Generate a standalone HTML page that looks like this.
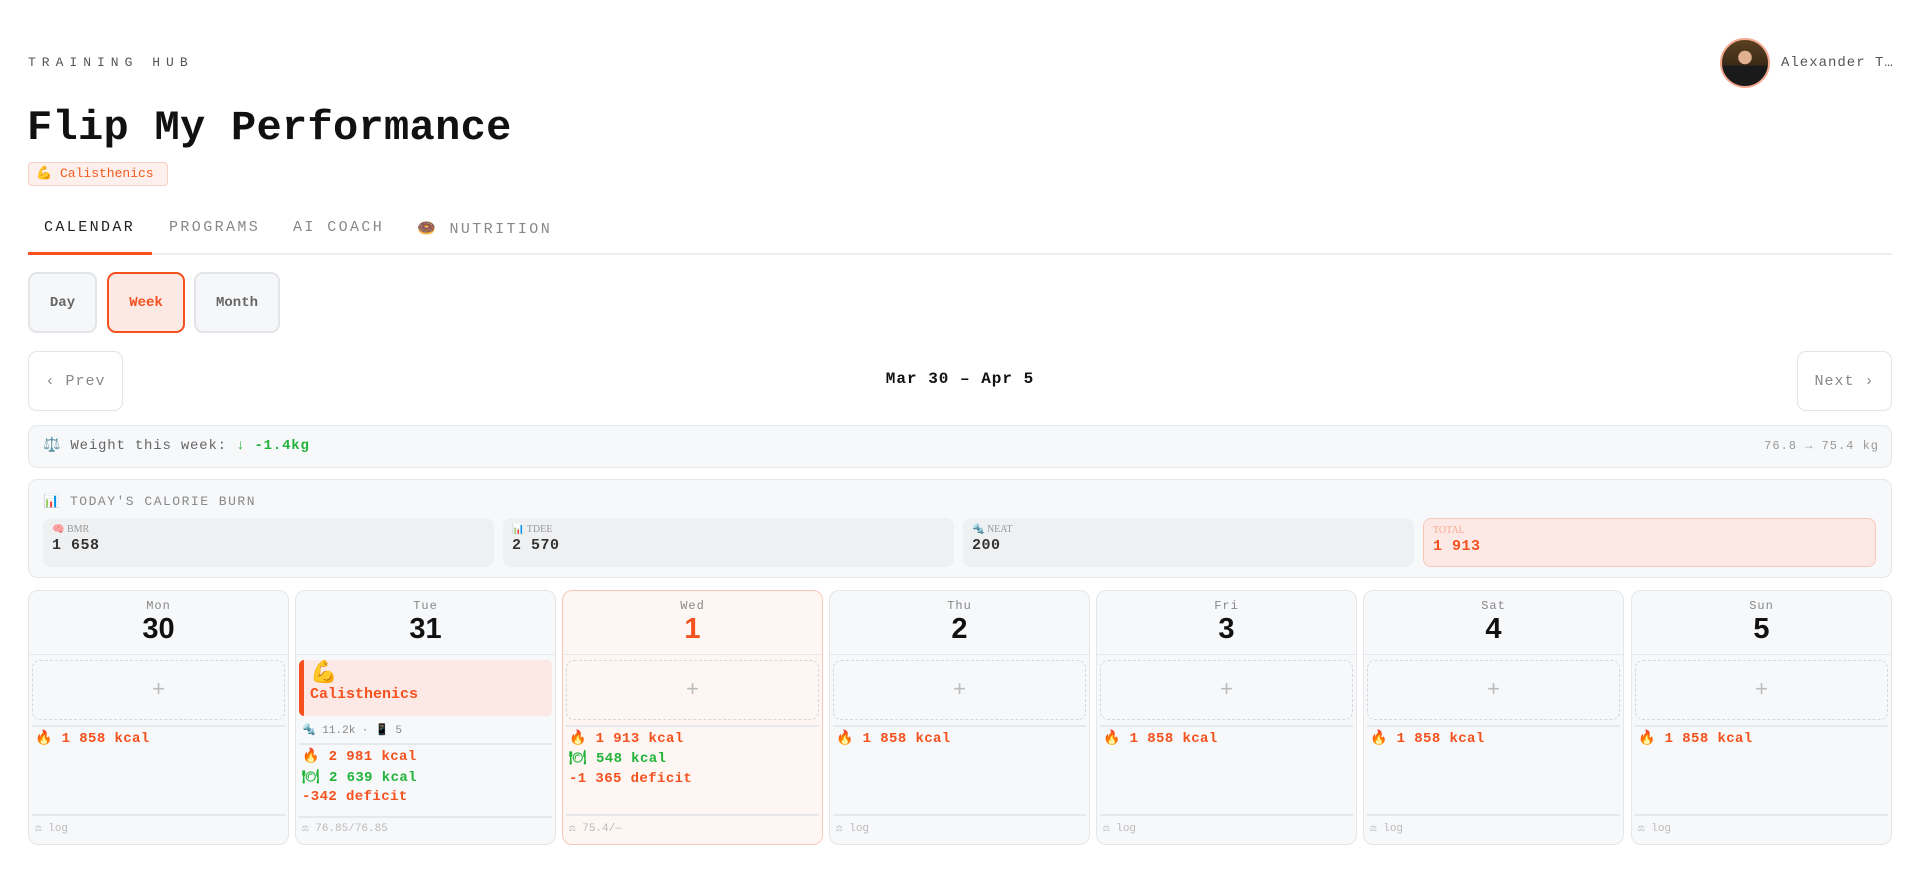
<!DOCTYPE html>
<html><head><meta charset="utf-8"><style>
*{box-sizing:border-box;margin:0;padding:0}
body{width:1920px;height:879px;background:#fff;font-family:"Liberation Mono",monospace;color:#222;position:relative;overflow:hidden}
.a{position:absolute}
.hub{left:28px;top:55px;font-size:13px;letter-spacing:6px;color:#555}
.title{left:27px;top:103px;font-size:42px;font-weight:bold;color:#111;line-height:50px;letter-spacing:0.3px}
.badge{left:28px;top:162px;height:24px;width:140px;border:1px solid #f8cfc4;background:#fdf0ec;border-radius:4px;font-size:13px;color:#f05a1e;padding:3px 7px;line-height:16px}
.tab{top:219px;font-size:15px;letter-spacing:2.4px;color:#888}
.line{left:28px;top:253px;width:1864px;height:2px;background:#eee}
.uline{left:28px;top:252px;width:124px;height:3px;background:#f4511e}
.btn{top:272px;height:61px;border:2px solid #e2e4e7;background:#f6f7f9;border-radius:9px;font-size:14px;font-weight:bold;color:#666;display:flex;align-items:center;justify-content:center}
.nav{top:351px;height:60px;width:95px;border:1.5px solid #e3e4e6;border-radius:9px;font-size:15px;color:#888;display:flex;align-items:center;justify-content:center;background:#fff;letter-spacing:1px}
.card{left:28px;width:1864px;border:1.5px solid #e6e8eb;background:#f7f8fa;border-radius:9px}
.sub{top:518px;height:49px;width:451px;background:#eff0f2;border-radius:8px;padding:6px 9px}
.sub .l{font-size:10px;color:#999;font-family:"Liberation Serif",serif;line-height:12px}
.sub .v{font-size:15px;font-weight:bold;color:#333;line-height:20px;letter-spacing:0.5px}
.col{top:590px;width:261px;height:255px;border:1.5px solid #e4e6e9;background:#f7f8fa;border-radius:10px}
.col .dn{position:absolute;top:8px;width:100%;text-align:center;font-size:12px;color:#888;letter-spacing:1px}
.col .num{position:absolute;top:22px;width:100%;text-align:center;font-size:29px;font-weight:bold;color:#111;font-family:"Liberation Sans",sans-serif}
.col .hd{position:absolute;top:63px;left:0;right:0;height:1px;background:#e6e8eb}
.col .add{position:absolute;top:69px;left:3px;right:3px;height:60px;border:1.5px dashed #d6d8db;border-radius:8px;text-align:center;line-height:56px;font-size:22px;color:#bbb;font-family:"Liberation Sans",sans-serif}
.col .sep{position:absolute;top:134px;left:3px;right:3px;height:1.5px;background:#e6e8eb}
.col .k{position:absolute;left:6px;font-size:14px;font-weight:bold;color:#f4511e;letter-spacing:0.4px}
.col .g{color:#22b33a}
.col .fd{position:absolute;top:223px;left:3px;right:3px;height:1.5px;background:#e6e8eb}
.col .ft{position:absolute;top:230px;left:6px;font-size:11px;color:#bbb}
.today{background:#fdf6f3;border-color:#f8c7b8}
</style></head><body>
<div class="a hub">TRAINING HUB</div>
<div class="a" style="left:1720px;top:38px;width:50px;height:50px;border-radius:50%;border:2px solid #f3a98f;background:radial-gradient(circle at 50% 38%,#e0b090 0 18%,transparent 19%),linear-gradient(180deg,#5a4020 0,#3b2a18 55%,#1a1a1a 56%,#1a1a1a 100%)"></div>
<div class="a" style="left:1781px;top:55px;font-size:14px;color:#555;letter-spacing:1px">Alexander T…</div>
<div class="a title">Flip My Performance</div>
<div class="a badge">💪 Calisthenics</div>
<div class="a tab" style="left:44px;color:#222">CALENDAR</div>
<div class="a tab" style="left:169px">PROGRAMS</div>
<div class="a tab" style="left:293px">AI COACH</div>
<div class="a tab" style="left:417px">🍩 NUTRITION</div>
<div class="a line"></div><div class="a uline"></div>
<div class="a btn" style="left:28px;width:69px">Day</div>
<div class="a btn" style="left:107px;width:78px;border-color:#f4511e;background:#fde9e4;color:#f4511e">Week</div>
<div class="a btn" style="left:194px;width:86px">Month</div>
<div class="a nav" style="left:28px">‹ Prev</div>
<div class="a" style="left:0;width:1920px;top:370px;text-align:center;font-size:16px;font-weight:bold;color:#111;letter-spacing:1px">Mar 30 – Apr 5</div>
<div class="a nav" style="left:1797px">Next ›</div>
<div class="a card" style="top:425px;height:43px"></div>
<div class="a" style="left:43px;top:437px;font-size:14px;color:#666;letter-spacing:0.8px">⚖️ Weight this week: <b style="color:#22b33a">↓ -1.4kg</b></div>
<div class="a" style="right:41px;top:439px;font-size:12px;color:#999;letter-spacing:1px">76.8 → 75.4 kg</div>
<div class="a card" style="top:479px;height:99px"></div>
<div class="a" style="left:43px;top:494px;font-size:13px;color:#888;letter-spacing:1.5px">📊 TODAY'S CALORIE BURN</div>
<div class="a sub" style="left:43px"><div class="l">🧠 BMR</div><div class="v">1 658</div></div>
<div class="a sub" style="left:503px"><div class="l">📊 TDEE</div><div class="v">2 570</div></div>
<div class="a sub" style="left:963px"><div class="l">🔩 NEAT</div><div class="v">200</div></div>
<div class="a sub" style="left:1423px;width:453px;background:#fce9e6;border:1px solid #f8c7b8"><div class="l" style="color:#f8a890">TOTAL</div><div class="v" style="color:#f4511e">1 913</div></div>

<div class="a col" style="left:28px"><div class="dn">Mon</div><div class="num">30</div><div class="hd"></div><div class="add">+</div><div class="sep"></div><div class="k" style="top:139px">🔥 1 858 kcal</div><div class="fd"></div><div class="ft">⚖ log</div></div>
<div class="a col" style="left:295px"><div class="dn">Tue</div><div class="num">31</div><div class="hd"></div>
<div style="position:absolute;top:69px;left:3px;right:3px;height:56px;background:#fce9e6;border-left:5px solid #f4511e;border-radius:5px;padding:2px 6px"><div style="font-size:22px;line-height:24px">💪</div><div style="font-size:15px;font-weight:bold;color:#f4511e">Calisthenics</div></div>
<div class="ft" style="top:132px;color:#888">🔩 11.2k · 📱 5</div>
<div class="sep" style="top:152px"></div>
<div class="k" style="top:157px">🔥 2 981 kcal</div><div class="k g" style="top:178px">🍽 2 639 kcal</div><div class="k" style="top:198px">-342 deficit</div>
<div class="fd" style="top:225px"></div><div class="ft">⚖ 76.85/76.85</div></div>
<div class="a col today" style="left:562px"><div class="dn">Wed</div><div class="num" style="color:#f4511e">1</div><div class="hd"></div><div class="add">+</div><div class="sep"></div><div class="k" style="top:139px">🔥 1 913 kcal</div><div class="k g" style="top:159px">🍽 548 kcal</div><div class="k" style="top:180px">-1 365 deficit</div><div class="fd"></div><div class="ft">⚖ 75.4/—</div></div>
<div class="a col" style="left:829px"><div class="dn">Thu</div><div class="num">2</div><div class="hd"></div><div class="add">+</div><div class="sep"></div><div class="k" style="top:139px">🔥 1 858 kcal</div><div class="fd"></div><div class="ft">⚖ log</div></div>
<div class="a col" style="left:1096px"><div class="dn">Fri</div><div class="num">3</div><div class="hd"></div><div class="add">+</div><div class="sep"></div><div class="k" style="top:139px">🔥 1 858 kcal</div><div class="fd"></div><div class="ft">⚖ log</div></div>
<div class="a col" style="left:1363px"><div class="dn">Sat</div><div class="num">4</div><div class="hd"></div><div class="add">+</div><div class="sep"></div><div class="k" style="top:139px">🔥 1 858 kcal</div><div class="fd"></div><div class="ft">⚖ log</div></div>
<div class="a col" style="left:1631px"><div class="dn">Sun</div><div class="num">5</div><div class="hd"></div><div class="add">+</div><div class="sep"></div><div class="k" style="top:139px">🔥 1 858 kcal</div><div class="fd"></div><div class="ft">⚖ log</div></div>
</body></html>
